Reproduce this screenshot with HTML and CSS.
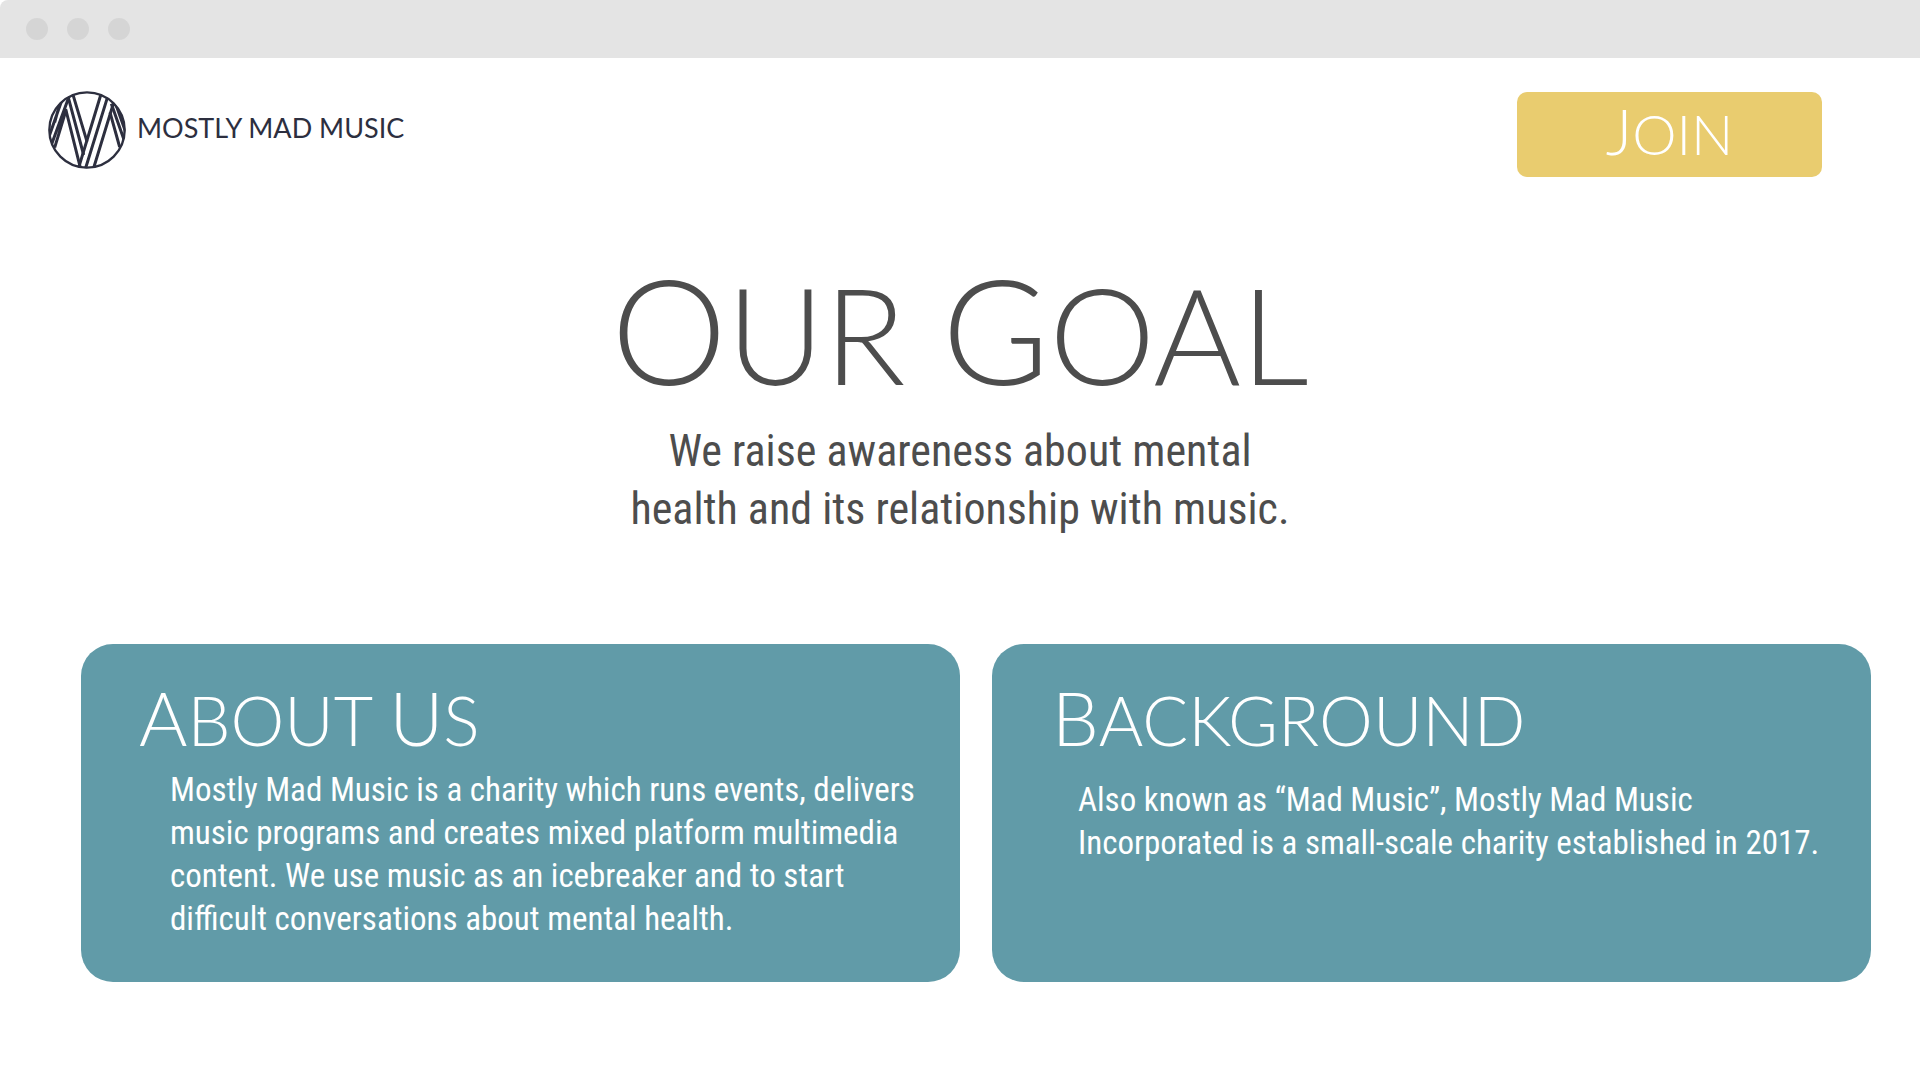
FILE: index.html
```html
<!DOCTYPE html>
<html lang="en">
<head>
<meta charset="utf-8">
<meta name="viewport" content="width=device-width, initial-scale=1">
<title>Mostly Mad Music</title>
<link rel="stylesheet" href="styles.css">
</head>
<body>
<div class="browser-bar"><span class="dot"></span><span class="dot"></span><span class="dot"></span></div>
<header class="site-header">
  <a class="brand" href="#">
    <svg class="brand-mark" viewBox="6 6 234 234" aria-hidden="true">
      <defs><clipPath id="disc"><circle cx="123" cy="123" r="115"/></clipPath></defs>
      <g fill="none" stroke="currentColor" stroke-width="7">
        <circle cx="123" cy="123" r="113"/>
        <g clip-path="url(#disc)" stroke-width="9">
          <path d="M166 12 98 236M186 20 118 240M205 34 142 240"/>
          <path d="M80 14 123 158M66 22 113 198M59 60 103 236"/>
          <path d="M70 20 16 168M60 64 26 176M48 32 8 146M42 42 26 100"/>
          <path d="M192 70 221 174M196 44 234 152M206 36 240 132"/>
        </g>
      </g>
    </svg>
    <span class="brand-name">MOSTLY MAD MUSIC</span>
  </a>
  <button class="join" type="button"><span class="initial">J</span>OIN</button>
</header>
<main>
  <section class="goal">
    <h1><span class="initial">O</span>UR <span class="initial">G</span>OAL</h1>
    <p>We raise awareness about mental<br>health and its relationship with music.</p>
  </section>
  <section class="cards">
    <article class="card">
      <h2><span class="initial">A</span>BOUT <span class="initial">U</span>S</h2>
      <p>Mostly Mad Music is a charity which runs events, delivers<br>music programs and creates mixed platform multimedia<br>content. We use music as an icebreaker and to start<br>difficult conversations about mental health.</p>
    </article>
    <article class="card card-background">
      <h2><span class="initial">B</span>ACKGROUND</h2>
      <p>Also known as “Mad Music”, Mostly Mad Music<br>Incorporated is a small-scale charity established in 2017.</p>
    </article>
  </section>
</main>
</body>
</html>
```
FILE: styles.css
```css
* { box-sizing: border-box; }
body {
  margin: 0;
  background: #fff;
  color: #4d4d4d;
  font-family: "Roboto Condensed", "Liberation Sans Narrow", sans-serif;
}
.browser-bar {
  display: flex;
  align-items: center;
  gap: 19px;
  height: 58px;
  padding-left: 26px;
  border-top-left-radius: 8px;
  background: #e4e4e4;
}
.dot { width: 22px; height: 22px; border-radius: 50%; background: #d5d5d5; }
.site-header {
  display: flex;
  justify-content: space-between;
  align-items: center;
  padding: 33px 98px 0 48px;
}
.brand {
  display: flex;
  align-items: center;
  gap: 11px;
  padding-bottom: 9px;
  color: #2d2f3f;
  text-decoration: none;
}
.brand-mark { width: 78px; height: 78px; }
.brand-name { padding-bottom: 4px; font: 400 27px/36px Lato, sans-serif; }
.join {
  width: 305px;
  height: 85px;
  padding: 0 0 4px;
  border: 0;
  border-radius: 10px;
  background: #e9cc6f;
  color: #fff;
  font: 300 56px/76px Lato, sans-serif;
}
.join .initial { font-size: 64px; }
h1, h2, p { margin: 0; }
h1, h2 { font-family: Lato, sans-serif; font-weight: 300; }
.goal { padding-top: 71px; text-align: center; }
h1 { font-size: 134px; line-height: 160px; }
h1 .initial { font-size: 146px; }
.goal p { font-size: 44px; line-height: 58px; padding-top: 8px; }
.cards {
  display: grid;
  grid-template-columns: 1fr 1fr;
  gap: 32px;
  padding: 106px 49px 98px 81px;
}
.card {
  min-height: 338px;
  padding: 30px 0 32px 58px;
  border-radius: 32px;
  background: #619ba8;
  color: #fff;
}
h2 { font-size: 68px; line-height: 88px; }
h2 .initial { font-size: 74px; }
.card p { padding: 4px 0 0 31px; font-size: 33px; line-height: 43px; }
.card-background { padding-left: 60px; }
.card-background p { padding: 14px 0 0 26px; }
```
